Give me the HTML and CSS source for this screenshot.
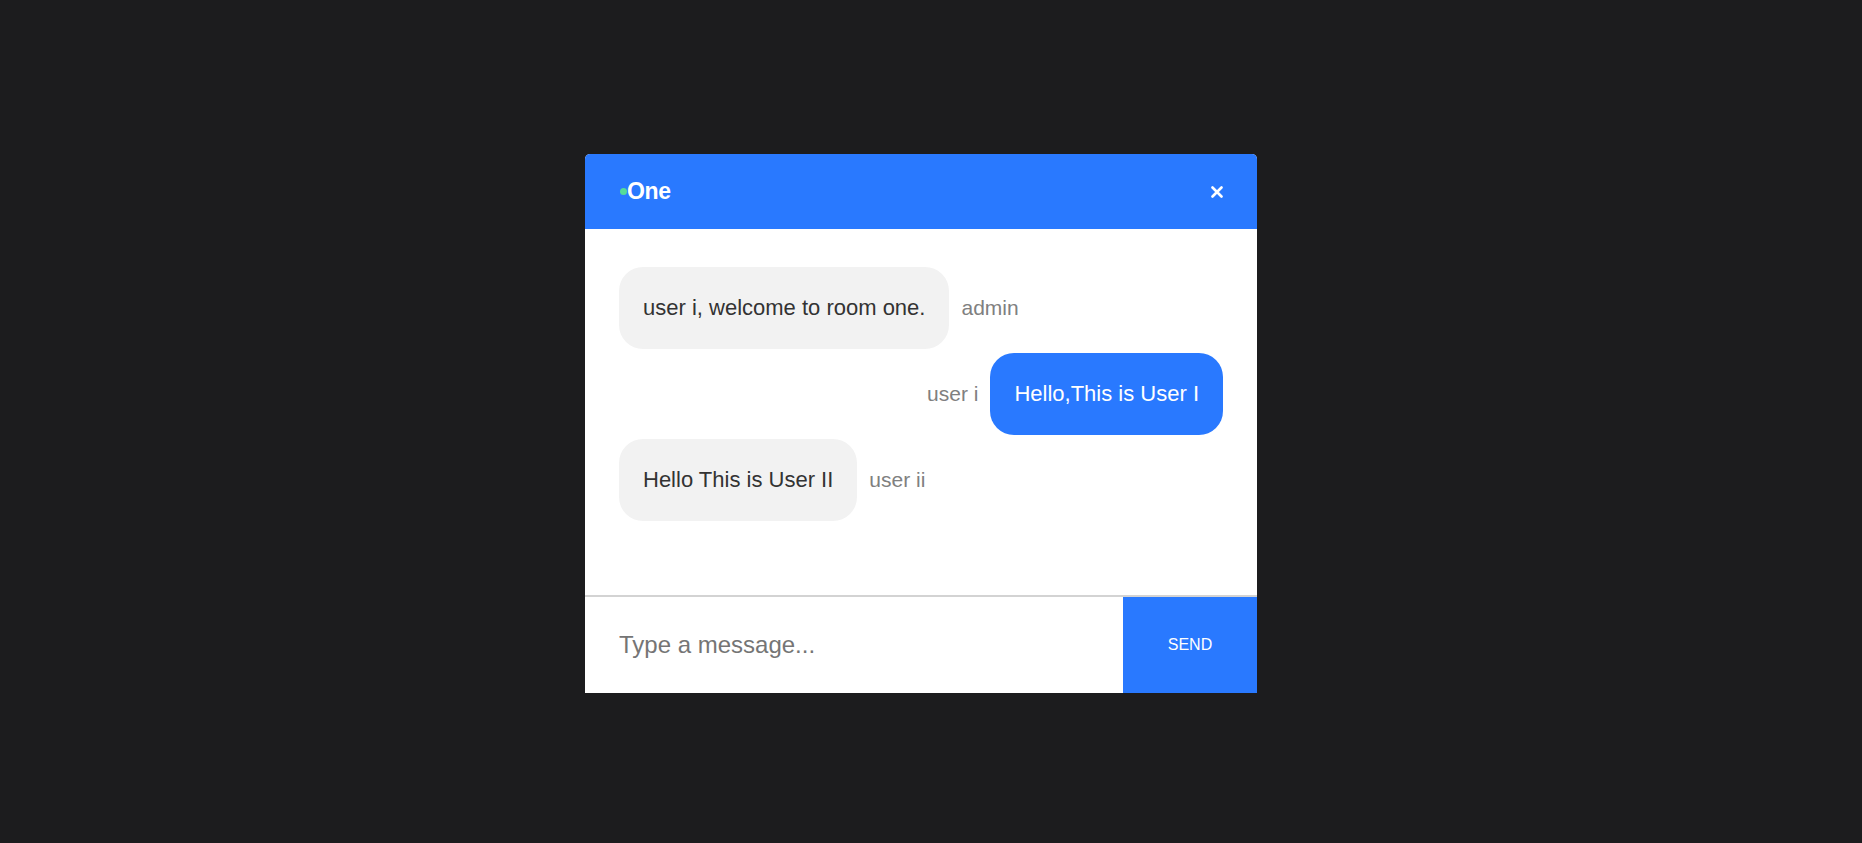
FILE: index.html
```html
<!DOCTYPE html>
<html lang="en">
<head>
<meta charset="utf-8">
<title>Chat - One</title>
<link rel="stylesheet" href="styles.css">
</head>
<body>
<div class="page">
  <div class="chat">
    <div class="chat-header">
      <div class="room-title"><span class="online-dot"></span>One</div>
      <button class="close-btn" aria-label="Close">
        <svg width="12" height="12" viewBox="0 0 12 12"><path d="M1.5 1.5 L10.5 10.5 M10.5 1.5 L1.5 10.5" stroke="#fff" stroke-width="2.6" stroke-linecap="round"/></svg>
      </button>
    </div>
    <div class="chat-body">
      <div class="msg-row">
        <div class="bubble bubble-other">user i, welcome to room one.</div>
        <span class="sender">admin</span>
      </div>
      <div class="msg-row msg-row-own">
        <span class="sender">user i</span>
        <div class="bubble bubble-own">Hello,This is User I</div>
      </div>
      <div class="msg-row">
        <div class="bubble bubble-other">Hello This is User II</div>
        <span class="sender">user ii</span>
      </div>
    </div>
    <form class="chat-footer">
      <input class="msg-input" type="text" placeholder="Type a message...">
      <button class="send-btn" type="button">SEND</button>
    </form>
  </div>
</div>
</body>
</html>
```

FILE: styles.css
```css
* {
  box-sizing: border-box;
}

html, body {
  margin: 0;
  padding: 0;
}

body {
  background: #1c1c1e;
  font-family: "Liberation Sans", Arial, sans-serif;
}

.page {
  min-height: 100vh;
  display: flex;
  align-items: center;
  justify-content: center;
  padding: 4px 20px 0 0;
}

.chat {
  width: 672px;
  background: #ffffff;
  border-radius: 5px 5px 0 0;
  overflow: hidden;
  display: flex;
  flex-direction: column;
}

.chat-header {
  height: 75px;
  background: #2979ff;
  display: flex;
  align-items: center;
  justify-content: space-between;
  padding: 0 34px;
}

.room-title {
  display: flex;
  align-items: center;
  color: #ffffff;
  font-weight: bold;
  font-size: 23px;
  letter-spacing: -0.3px;
}

.online-dot {
  width: 7px;
  height: 7px;
  border-radius: 50%;
  background: #55dc98;
  margin-left: 1px;
}

.close-btn {
  background: none;
  border: none;
  padding: 0;
  width: 12px;
  height: 12px;
  display: flex;
  cursor: pointer;
}

.chat-body {
  height: 366px;
  padding: 38px 34px 0;
  display: flex;
  flex-direction: column;
}

.msg-row {
  display: flex;
  align-items: center;
  gap: 12px;
  margin-bottom: 4px;
}

.msg-row-own {
  justify-content: flex-end;
}

.bubble {
  font-size: 22px;
  line-height: 34px;
  padding: 24px;
  border-radius: 24px;
  white-space: nowrap;
}

.bubble-other {
  background: #f2f2f2;
  color: #333333;
}

.bubble-own {
  background: #2979ff;
  color: #ffffff;
}

.sender {
  font-size: 21px;
  color: #808080;
}

.chat-footer {
  margin: 0;
  border-top: 2px solid #d3d3d3;
  height: 98px;
  display: flex;
}

.msg-input {
  flex: 1;
  border: none;
  outline: none;
  padding: 0 34px;
  font-family: "Liberation Sans", Arial, sans-serif;
  font-size: 24px;
  color: #333333;
  background: #ffffff;
}

.msg-input::placeholder {
  color: #757575;
}

.send-btn {
  width: 134px;
  border: none;
  background: #2979ff;
  color: #ffffff;
  font-family: "Liberation Sans", Arial, sans-serif;
  font-size: 16px;
  cursor: pointer;
}
```
